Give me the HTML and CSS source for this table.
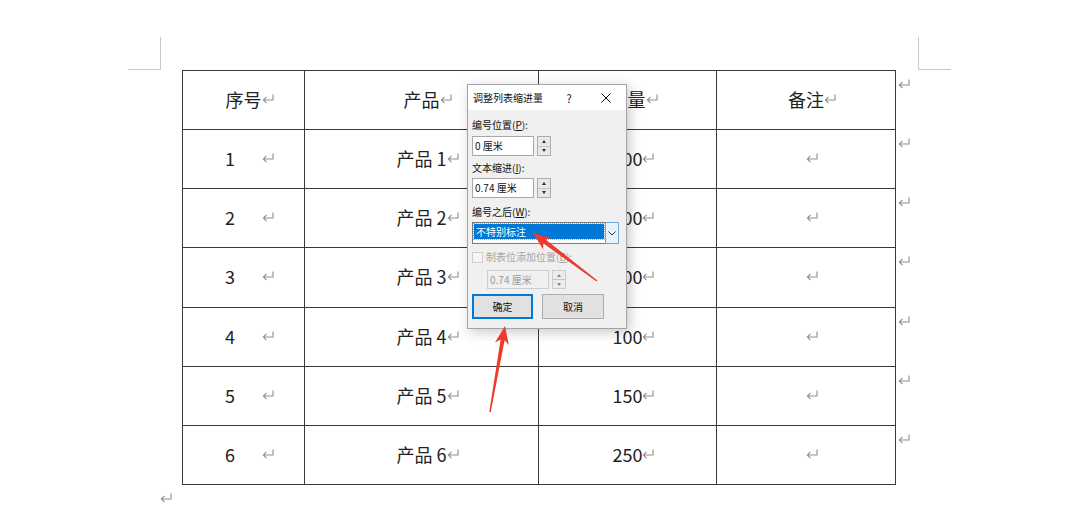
FILE: index.html
```html
<!DOCTYPE html>
<html>
<head>
<meta charset="utf-8">
<link rel="stylesheet" href="styles.css">
</head>
<body>
<svg class="defs" width="0" height="0" aria-hidden="true">
  <symbol id="ret" viewBox="0 0 12 10">
    <path d="M11 0.5 V6 H1.4 M4.5 2.9 L1.4 6 L4.5 9.1" fill="none" stroke="currentColor" stroke-width="1.1"/>
  </symbol>
</svg>
<div class="page">
  <div class="corner corner-left"></div>
  <div class="corner corner-right"></div>

  <table class="doc-table">
    <colgroup>
      <col class="c1"><col class="c2"><col class="c3"><col class="c4"><col class="c5">
    </colgroup>
    <tr class="r-head">
      <td>序号<svg class="ret"><use href="#ret"/></svg></td>
      <td>产品<svg class="ret"><use href="#ret"/></svg></td>
      <td>销量<svg class="ret"><use href="#ret"/></svg></td>
      <td>备注<svg class="ret"><use href="#ret"/></svg></td>
      <td class="rowend"><svg class="ret"><use href="#ret"/></svg></td>
    </tr>
    <tr>
      <td><span class="num">1</span><svg class="ret"><use href="#ret"/></svg></td>
      <td>产品 1<svg class="ret"><use href="#ret"/></svg></td>
      <td>100<svg class="ret"><use href="#ret"/></svg></td>
      <td><svg class="ret"><use href="#ret"/></svg></td>
      <td class="rowend"><svg class="ret"><use href="#ret"/></svg></td>
    </tr>
    <tr>
      <td><span class="num">2</span><svg class="ret"><use href="#ret"/></svg></td>
      <td>产品 2<svg class="ret"><use href="#ret"/></svg></td>
      <td>200<svg class="ret"><use href="#ret"/></svg></td>
      <td><svg class="ret"><use href="#ret"/></svg></td>
      <td class="rowend"><svg class="ret"><use href="#ret"/></svg></td>
    </tr>
    <tr class="r-tall">
      <td><span class="num">3</span><svg class="ret"><use href="#ret"/></svg></td>
      <td>产品 3<svg class="ret"><use href="#ret"/></svg></td>
      <td>300<svg class="ret"><use href="#ret"/></svg></td>
      <td><svg class="ret"><use href="#ret"/></svg></td>
      <td class="rowend"><svg class="ret"><use href="#ret"/></svg></td>
    </tr>
    <tr>
      <td><span class="num">4</span><svg class="ret"><use href="#ret"/></svg></td>
      <td>产品 4<svg class="ret"><use href="#ret"/></svg></td>
      <td>100<svg class="ret"><use href="#ret"/></svg></td>
      <td><svg class="ret"><use href="#ret"/></svg></td>
      <td class="rowend"><svg class="ret"><use href="#ret"/></svg></td>
    </tr>
    <tr>
      <td><span class="num">5</span><svg class="ret"><use href="#ret"/></svg></td>
      <td>产品 5<svg class="ret"><use href="#ret"/></svg></td>
      <td>150<svg class="ret"><use href="#ret"/></svg></td>
      <td><svg class="ret"><use href="#ret"/></svg></td>
      <td class="rowend"><svg class="ret"><use href="#ret"/></svg></td>
    </tr>
    <tr>
      <td><span class="num">6</span><svg class="ret"><use href="#ret"/></svg></td>
      <td>产品 6<svg class="ret"><use href="#ret"/></svg></td>
      <td>250<svg class="ret"><use href="#ret"/></svg></td>
      <td><svg class="ret"><use href="#ret"/></svg></td>
      <td class="rowend"><svg class="ret"><use href="#ret"/></svg></td>
    </tr>
  </table>
  <div class="after-para"><svg class="ret"><use href="#ret"/></svg></div>

  <div class="dialog">
    <div class="dlg-title">
      <span class="dlg-name">调整列表缩进量</span>
      <span class="dlg-help">?</span>
      <span class="dlg-close">
        <svg width="10" height="10" viewBox="0 0 10 10"><path d="M0.5 0.5 L9.5 9.5 M9.5 0.5 L0.5 9.5" stroke="#111" stroke-width="1"/></svg>
      </span>
    </div>
    <div class="dlg-body">
      <div class="lbl l1">编号位置(<u>P</u>):</div>
      <div class="field-row r1">
        <div class="inp">0 厘米</div>
        <div class="spin"><span class="up"></span><span class="down"></span></div>
      </div>
      <div class="lbl l2">文本缩进(<u>I</u>):</div>
      <div class="field-row r2">
        <div class="inp">0.74 厘米</div>
        <div class="spin"><span class="up"></span><span class="down"></span></div>
      </div>
      <div class="lbl l3">编号之后(<u>W</u>):</div>
      <div class="combo">
        <div class="combo-text"><span class="sel">不特别标注</span></div>
        <div class="combo-btn">
          <svg width="8" height="5" viewBox="0 0 8 5"><path d="M0.5 0.5 L4 4 L7.5 0.5" fill="none" stroke="#333" stroke-width="1"/></svg>
        </div>
      </div>
      <div class="check-row">
        <span class="check"></span>
        <span class="check-lbl">制表位添加位置(<u>B</u>):</span>
      </div>
      <div class="field-row r3 disabled">
        <div class="inp">0.74 厘米</div>
        <div class="spin"><span class="up"></span><span class="down"></span></div>
      </div>
      <div class="btn-row">
        <div class="btn btn-ok">确定</div>
        <div class="btn btn-cancel">取消</div>
      </div>
    </div>
  </div>

  <svg class="arrows" width="1080" height="511" viewBox="0 0 1080 511">
    <polygon fill="#ec3a2c" points="533,233 551.6,238.2 545.6,239.6 597.4,280.4 596.6,281.6 543.2,243.2 543.2,249.4"/>
    <polygon fill="#ec3a2c" points="505,326 508.8,344.9 504.6,340.3 490.7,412.2 489.3,411.8 500.6,339.5 495.0,342.5"/>
  </svg>
</div>
</body>
</html>
```
FILE: styles.css
```css
* { box-sizing: border-box; }
html, body { margin: 0; background: #fff; }
body {
  width: 1080px;
  height: 511px;
  overflow: hidden;
  font-family: "Noto Sans CJK SC", "Noto Sans", sans-serif;
  color: #222;
}
.defs { position: absolute; width: 0; height: 0; }
.page {
  position: relative;
  width: 1080px;
  height: 511px;
  padding: 70px 0 0 160px;
}
.corner {
  position: absolute;
  top: 37px;
  width: 33px;
  height: 33px;
  border: 0 solid #c8c8c8;
}
.corner-left { left: 128px; border-right-width: 1px; border-bottom-width: 1px; }
.corner-right { left: 918px; border-left-width: 1px; border-bottom-width: 1px; }

.ret {
  width: 12px;
  height: 10px;
  color: #8e8e8e;
  display: inline-block;
  vertical-align: 3px;
  margin-right: -12px;
}

.doc-table {
  border-collapse: collapse;
  table-layout: fixed;
  margin-left: 22px;
  width: 734px;
}
col.c1 { width: 122px; }
col.c2 { width: 234px; }
col.c3 { width: 178px; }
col.c4 { width: 179px; }
col.c5 { width: 21px; }
.doc-table tr { height: 59px; }
.doc-table tr.r-tall { height: 60px; }
.doc-table td {
  border: 1px solid #3a3a3a;
  padding: 0 0 3px 0;
  text-align: center;
  vertical-align: middle;
  font-size: 18px;
  line-height: 24px;
  white-space: nowrap;
}
.doc-table td.rowend {
  border: none;
  text-align: left;
  vertical-align: top;
  padding: 8px 0 0 2px;
  line-height: 10px;
}
.doc-table td.rowend .ret { vertical-align: top; }
.num { display: inline-block; margin-right: 27px; }

.after-para {
  padding-top: 8px;
  line-height: 10px;
}
.after-para .ret { vertical-align: top; }

/* dialog */
.dialog {
  position: absolute;
  left: 467px;
  top: 84px;
  width: 160px;
  height: 245px;
  background: #f0f0f0;
  border: 1px solid #a3a3a3;
  box-shadow: 3px 3px 12px rgba(0, 0, 0, 0.22);
  font-size: 10px;
  line-height: 12px;
  color: #111;
  display: flex;
  flex-direction: column;
}
.dlg-title {
  height: 25px;
  background: #fff;
  display: flex;
  align-items: center;
  padding-left: 5px;
}
.dlg-name { flex: 1; }
.dlg-help { width: 34px; text-align: center; font-size: 11px; }
.dlg-close {
  width: 40px;
  display: flex;
  justify-content: center;
  align-items: center;
}
.dlg-body {
  display: flex;
  flex-direction: column;
  align-items: flex-start;
  padding-left: 4px;
}
.lbl u, .check-lbl u { text-decoration: underline; }
.l1 { margin-top: 9px; }
.r1 { margin-top: 5px; }
.l2 { margin-top: 6px; }
.r2 { margin-top: 4px; }
.l3 { margin-top: 8px; }
.field-row { display: flex; height: 20px; }
.inp {
  width: 62px;
  height: 100%;
  background: #fff;
  border: 1px solid #a8a8a8;
  padding-left: 2px;
  display: flex;
  align-items: center;
}
.spin {
  margin-left: 3px;
  width: 14px;
  height: 100%;
  border: 1px solid #acacac;
  display: flex;
  flex-direction: column;
  background: #e8e8e8;
}
.spin span {
  flex: 1;
  display: flex;
  align-items: center;
  justify-content: center;
}
.spin .up { border-bottom: 1px solid #c4c4c4; }
.spin .up::before {
  content: "";
  border-left: 2.5px solid transparent;
  border-right: 2.5px solid transparent;
  border-bottom: 3px solid #333;
}
.spin .down::before {
  content: "";
  border-left: 2.5px solid transparent;
  border-right: 2.5px solid transparent;
  border-top: 3px solid #333;
}
.combo {
  margin-top: 4px;
  width: 147px;
  height: 22px;
  display: flex;
  background: #fff;
  border: 1px solid #7a7a7a;
}
.combo-text { flex: 1; padding: 1px 1px 0 1px; }
.sel {
  display: block;
  height: 15px;
  background: #0078d7;
  color: #fff;
  padding-left: 2px;
  line-height: 15px;
  outline: 1px dotted #7fb6e8;
}
.combo-btn {
  width: 14px;
  background: #e5f1fb;
  border: 1px solid #6fa9dc;
  margin: -1px -1px -1px 0;
  display: flex;
  align-items: center;
  justify-content: center;
}
.check-row {
  margin-top: 7px;
  display: flex;
  align-items: center;
  height: 12px;
}
.check {
  width: 11px;
  height: 11px;
  background: #f6f6f6;
  border: 1px solid #cfcfcf;
  margin-right: 3px;
}
.check-lbl { color: #a5a5a5; }
.r3 { margin-top: 7px; margin-left: 15px; height: 19px; }
.disabled .inp {
  background: #f0f0f0;
  border-color: #cdcdcd;
  color: #9a9a9a;
}
.disabled .spin { background: #ececec; border-color: #cdcdcd; }
.disabled .spin span::before { border-top-color: #888; border-bottom-color: #888; }
.btn-row {
  margin-top: 5px;
  display: flex;
  gap: 9px;
}
.btn {
  height: 25px;
  display: flex;
  align-items: center;
  justify-content: center;
  background: #e1e1e1;
}
.btn-ok { width: 61px; border: 2px solid #0078d7; }
.btn-cancel { width: 62px; border: 1px solid #adadad; }

.arrows {
  position: absolute;
  left: 0;
  top: 0;
  pointer-events: none;
}
```
